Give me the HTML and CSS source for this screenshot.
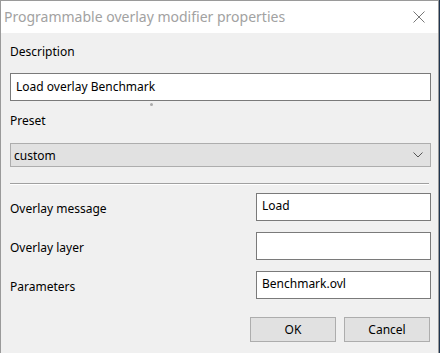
FILE: index.html
```html
<!DOCTYPE html>
<html lang="en">
<head>
  <meta charset="UTF-8">
  <title>Programmable overlay modifier properties</title>
  <link rel="stylesheet" href="styles.css">
</head>
<body>

  <div class="dialog">
    <div class="titlebar">
      <span class="title">Programmable overlay modifier properties</span>
      <svg class="close" width="12" height="12" viewBox="0 0 12 12">
        <path d="M0.5 0.5 L11.5 11.5 M11.5 0.5 L0.5 11.5" stroke="#777" stroke-width="1" fill="none"/>
      </svg>
    </div>

    <div class="content">
      <div class="label">Description</div>
      <div class="field wide">Load overlay Benchmark</div>
      <span class="dot"></span>

      <div class="label preset-label">Preset</div>
      <div class="combo">
        <span>custom</span>
        <svg width="10" height="6" viewBox="0 0 10 6">
          <path d="M0.5 0.5 L5 5 L9.5 0.5" stroke="#555" stroke-width="1" fill="none"/>
        </svg>
      </div>

      <div class="separator"></div>

      <div class="form">
        <div class="label">Overlay message</div>
        <div class="field">Load</div>
        <div class="label">Overlay layer</div>
        <div class="field"></div>
        <div class="label">Parameters</div>
        <div class="field">Benchmark.ovl</div>
      </div>

      <div class="buttons">
        <button>OK</button>
        <button>Cancel</button>
      </div>
    </div>
  </div>

</body>
</html>
```

FILE: styles.css
```css
* {
  box-sizing: border-box;
}

body {
  margin: 0;
  background: #1f3550;
  font-family: "Noto Sans", "Open Sans", sans-serif;
  font-size: 12px;
  color: #000;
}

.dialog {
  width: 439px;
  height: 353px;
  border: 1px solid #9a9a9a;
  border-bottom: none;
  background: #f0f0f0;
}

.titlebar {
  height: 32px;
  background: #fff;
  display: flex;
  align-items: center;
  justify-content: space-between;
  padding: 0 13px 0 3px;
}

.title {
  font-size: 14px;
  color: #a2a2a2;
  margin-top: -1px;
}

.content {
  position: relative;
  padding: 11px 7px 0 9px;
}

.label {
  line-height: 16px;
}

.field {
  height: 28px;
  border: 1px solid #7a7a7a;
  background: #fff;
  padding: 4px 5px;
  line-height: 16px;
}

.wide {
  margin-top: 13px;
  padding-top: 5px;
}

.dot {
  position: absolute;
  left: 149px;
  top: 70px;
  width: 3px;
  height: 3px;
  border-radius: 50%;
  background: #aaa;
}

.preset-label {
  margin-top: 12px;
}

.combo {
  margin-top: 14px;
  height: 24px;
  border: 1px solid #adadad;
  background: #e1e1e1;
  display: flex;
  align-items: center;
  justify-content: space-between;
  padding: 0 7px 0 3px;
}

.separator {
  margin: 16px 2px 0 0;
  height: 2px;
  border-top: 1px solid #a0a0a0;
  border-bottom: 1px solid #fff;
}

.form {
  margin-top: 8px;
  display: grid;
  grid-template-columns: 1fr 175px;
  row-gap: 11px;
  align-items: center;
}

.form .label {
  margin-top: 4px;
}

.buttons {
  display: flex;
  justify-content: flex-end;
  gap: 8px;
  margin-top: 18px;
  padding-right: 1px;
}

.buttons button {
  width: 86px;
  height: 25px;
  border: 1px solid #adadad;
  background: #e1e1e1;
  font-family: inherit;
  font-size: 12px;
  color: #000;
  padding: 0;
}
```
